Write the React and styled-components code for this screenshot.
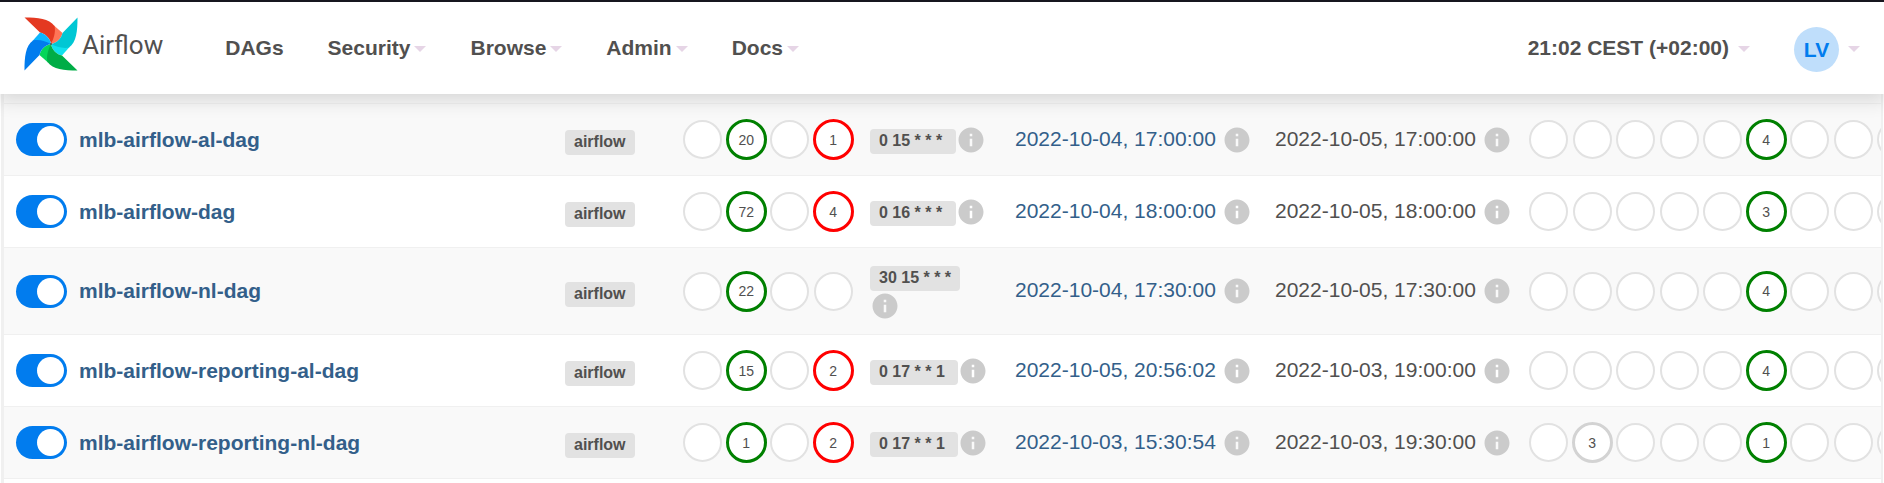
import React from "react";
import styled, { createGlobalStyle } from "styled-components";
import { MdInfo } from "react-icons/md";

const Global = createGlobalStyle`
  * { box-sizing: border-box; }
  body {
    margin: 0;
    background: #fff;
    color: #51504f;
    font: 21px/30px "Liberation Sans", Arial, sans-serif;
  }
  a { color: inherit; text-decoration: none; }
`;

const Navbar = styled.header`
  position: relative;
  z-index: 1;
  display: flex;
  align-items: center;
  justify-content: space-between;
  height: 94px;
  padding: 0 24px 0;
  background: #fff;
  border-top: 2px solid #17161f;
  box-shadow: 0 3px 18px 3px rgba(0, 0, 0, 0.14);
`;

const NavGroup = styled.nav`
  display: flex;
  align-items: center;
  gap: 44px;
`;

const Brand = styled.a`
  display: flex;
  align-items: center;
  gap: 4px;
  margin-right: 18px;
  padding-bottom: 8px;
`;

const BrandName = styled.span`
  padding-top: 2px;
  font: 400 26px/30px Roboto, sans-serif;
`;

const NavButton = styled.button`
  display: flex;
  align-items: center;
  gap: ${(p) => (p.$wide ? 9 : 4)}px;
  padding: 0;
  border: 0;
  background: none;
  color: inherit;
  font: bold 21px/30px "Liberation Sans", Arial, sans-serif;
  cursor: pointer;
`;

const Caret = styled.span`
  margin-top: 2px;
  border: 6px solid transparent;
  border-top-color: #e6d5e6;
  border-bottom: 0;
`;

const Avatar = styled.span`
  display: grid;
  place-items: center;
  width: 45px;
  height: 45px;
  margin-top: 3px;
  border-radius: 50%;
  background: #bfdefb;
  color: #017cee;
`;

const TablePanel = styled.main`
  margin: 0 1px;
  padding-bottom: 4px;
  border: solid #f0f0f0;
  border-width: 0 2px 0 3px;
  overflow: hidden;
`;

const DagTable = styled.table`
  width: 100%;
  table-layout: fixed;
  border-collapse: separate;
  border-spacing: 0;
  border-bottom: 1px solid #f0f0f0;
`;

const Col = styled.col`
  width: ${(p) => (p.$w ? `${p.$w}px` : "auto")};
`;

const HeadCell = styled.th`
  height: 9px;
  padding: 0;
  background: #f9f9f9;
`;

const Row = styled.tr`
  background: ${(p) => (p.$shaded ? "#f9f9f9" : "#fff")};
`;

const Cell = styled.td`
  height: ${(p) => (p.$tall ? 87 : 72)}px;
  padding: 0 ${(p) => p.$right || 0}px 0 ${(p) => p.$left || 0}px;
  border-top: 1px solid #f0f0f0;
  vertical-align: middle;
  white-space: nowrap;
  overflow: hidden;
`;

const Inline = styled.div`
  display: flex;
  align-items: center;
  gap: ${(p) => p.$gap || 0}px;
  flex-wrap: ${(p) => (p.$wrap ? "wrap" : "nowrap")};
`;

const Toggle = styled.input`
  appearance: none;
  flex: none;
  width: 51px;
  height: 33px;
  margin: 0;
  padding: 3px;
  border-radius: 17px;
  background: #ccc;
  cursor: pointer;

  &::before {
    content: "";
    display: block;
    width: 27px;
    height: 27px;
    border-radius: 50%;
    background: #fff;
  }
  &:checked { background: #017cee; }
  &:checked::before { margin-left: auto; }
`;

const DagLink = styled.a`
  color: #335f8a;
  font-weight: bold;
`;

const Label = styled.a`
  height: 25px;
  margin-top: ${(p) => (p.$tag ? 6 : 4)}px;
  padding: 0 9px;
  border-radius: 4px;
  background: #e2e2e2;
  font: bold 16px/23px "Liberation Sans", Arial, sans-serif;
  white-space: pre;
`;

const DateText = styled.time`
  padding-bottom: 2px;
`;

const RunLink = styled.a`
  padding-bottom: 2px;
  color: #335f8a;
`;

const InfoButton = styled.button`
  display: flex;
  padding: 0;
  border: 0;
  background: none;
  color: #cbcbcb;
`;

const States = styled.div`
  display: grid;
  grid-template-columns: repeat(${(p) => p.$count}, 1fr);
  width: ${(p) => p.$width}px;
  justify-items: center;
  align-items: center;
`;

const ringColors = { success: "#008000", failed: "#ff0000", queued: "#d3d3d3" };

const StateRing = styled.a`
  display: grid;
  place-items: center;
  width: ${(p) => (p.$state ? 41 : 39)}px;
  height: ${(p) => (p.$state ? 41 : 39)}px;
  border: ${(p) => (p.$state ? 3 : 2)}px solid
    ${(p) => ringColors[p.$state] || "#e2e2e2"};
  border-radius: 50%;
  background: #fff;
  font-size: 14px;
  line-height: 16px;
`;

const blades = [
  { angle: 0, main: "#e43921", light: "#ff7557" },
  { angle: 90, main: "#00c7d4", light: "#11e1ee" },
  { angle: 180, main: "#00ad46", light: "#04d659" },
  { angle: 270, main: "#017cee", light: "#0cb6ff" },
];

function Pinwheel() {
  return (
    <svg width="54" height="54" viewBox="0 0 54 54" aria-hidden="true">
      {blades.map((b) => (
        <g key={b.angle} transform={`rotate(${b.angle} 27 27)`}>
          <path fill={b.light} d="M30 8.500L38.500 16C37.500 21 33 26 27 27Z" />
          <path fill={b.main} d="M0.500 0.500C14 0.500 25 1.500 30.500 9C32 15 29.500 22 27 27C26 21 21 16.500 16 15.500Z" />
        </g>
      ))}
      <circle cx="27" cy="27" r="1" fill="#51504f" />
    </svg>
  );
}

function Info({ label }) {
  return (
    <InfoButton type="button" aria-label={label}>
      <MdInfo size={30} />
    </InfoButton>
  );
}

function StateGroup({ items, width }) {
  return (
    <States $count={items.length} $width={width}>
      {items.map((item, i) => (
        <StateRing key={i} href="#runs" $state={item && item[0]} aria-label={item ? `${item[0]} ${item[1]}` : "none"}>
          {item ? item[1] : null}
        </StateRing>
      ))}
    </States>
  );
}

const ok = (n) => ["success", n];
const bad = (n) => ["failed", n];
const queued = (n) => ["queued", n];

const dags = [
  { name: "mlb-airflow-al-dag", runs: [null, ok(20), null, bad(1)], schedule: "0 15 * * * ", last: "2022-10-04, 17:00:00", next: "2022-10-05, 17:00:00", tasks: { 5: ok(4) } },
  { name: "mlb-airflow-dag", runs: [null, ok(72), null, bad(4)], schedule: "0 16 * * * ", last: "2022-10-04, 18:00:00", next: "2022-10-05, 18:00:00", tasks: { 5: ok(3) } },
  { name: "mlb-airflow-nl-dag", runs: [null, ok(22), null, null], schedule: "30 15 * * *", last: "2022-10-04, 17:30:00", next: "2022-10-05, 17:30:00", tasks: { 5: ok(4) }, tall: true },
  { name: "mlb-airflow-reporting-al-dag", runs: [null, ok(15), null, bad(2)], schedule: "0 17 * * 1 ", last: "2022-10-05, 20:56:02", next: "2022-10-03, 19:00:00", tasks: { 5: ok(4) } },
  { name: "mlb-airflow-reporting-nl-dag", runs: [null, ok(1), null, bad(2)], schedule: "0 17 * * 1 ", last: "2022-10-03, 15:30:54", next: "2022-10-03, 19:30:00", tasks: { 1: queued(3), 5: ok(1) } },
];

const columns = ["DAG", "Owner", "Runs", "Schedule", "Last Run", "Next Run", "Recent Tasks"];
const columnWidths = [561, 116, 189, 145, 260, 252, null];
const taskStates = Array.from({ length: 16 }, (_, i) => i);

function DagRow({ dag, shaded }) {
  return (
    <Row $shaded={shaded}>
      <Cell $left={12} $tall={dag.tall}>
        <Inline $gap={12}>
          <Toggle type="checkbox" id={dag.name} defaultChecked aria-label={`Pause or unpause ${dag.name}`} />
          <DagLink href={`#${dag.name}`}>{dag.name}</DagLink>
        </Inline>
      </Cell>
      <Cell>
        <Inline><Label href="#owner" $tag>airflow</Label></Inline>
      </Cell>
      <Cell><StateGroup items={dag.runs} width={174} /></Cell>
      <Cell $right={26}>
        <Inline $wrap>
          <Label href="#schedule">{dag.schedule}</Label>
          <Info label="Schedule details" />
        </Inline>
      </Cell>
      <Cell>
        <Inline $gap={6}>
          <RunLink href="#last-run"><time>{dag.last}</time></RunLink>
          <Info label="Last run details" />
        </Inline>
      </Cell>
      <Cell>
        <Inline $gap={6}>
          <DateText>{dag.next}</DateText>
          <Info label="Next run details" />
        </Inline>
      </Cell>
      <Cell><StateGroup items={taskStates.map((i) => dag.tasks[i])} width={696} /></Cell>
    </Row>
  );
}

export default function App() {
  return (
    <>
      <Global />
      <Navbar>
        <NavGroup>
          <Brand href="#home">
            <Pinwheel />
            <BrandName>Airflow</BrandName>
          </Brand>
          <NavButton as="a" href="#dags">DAGs</NavButton>
          {["Security", "Browse", "Admin", "Docs"].map((t) => (
            <NavButton type="button" key={t}>{t}<Caret /></NavButton>
          ))}
        </NavGroup>
        <NavGroup>
          <NavButton type="button" $wide>21:02 CEST (+02:00)<Caret /></NavButton>
          <NavButton type="button" $wide><Avatar>LV</Avatar><Caret /></NavButton>
        </NavGroup>
      </Navbar>
      <TablePanel>
        <DagTable>
          <colgroup>
            {columnWidths.map((w, i) => <Col key={i} $w={w} />)}
          </colgroup>
          <thead>
            <tr>
              {columns.map((c) => <HeadCell key={c} scope="col" aria-label={c} />)}
            </tr>
          </thead>
          <tbody>
            {dags.map((dag, i) => <DagRow key={dag.name} dag={dag} shaded={i % 2 === 0} />)}
          </tbody>
        </DagTable>
      </TablePanel>
    </>
  );
}
